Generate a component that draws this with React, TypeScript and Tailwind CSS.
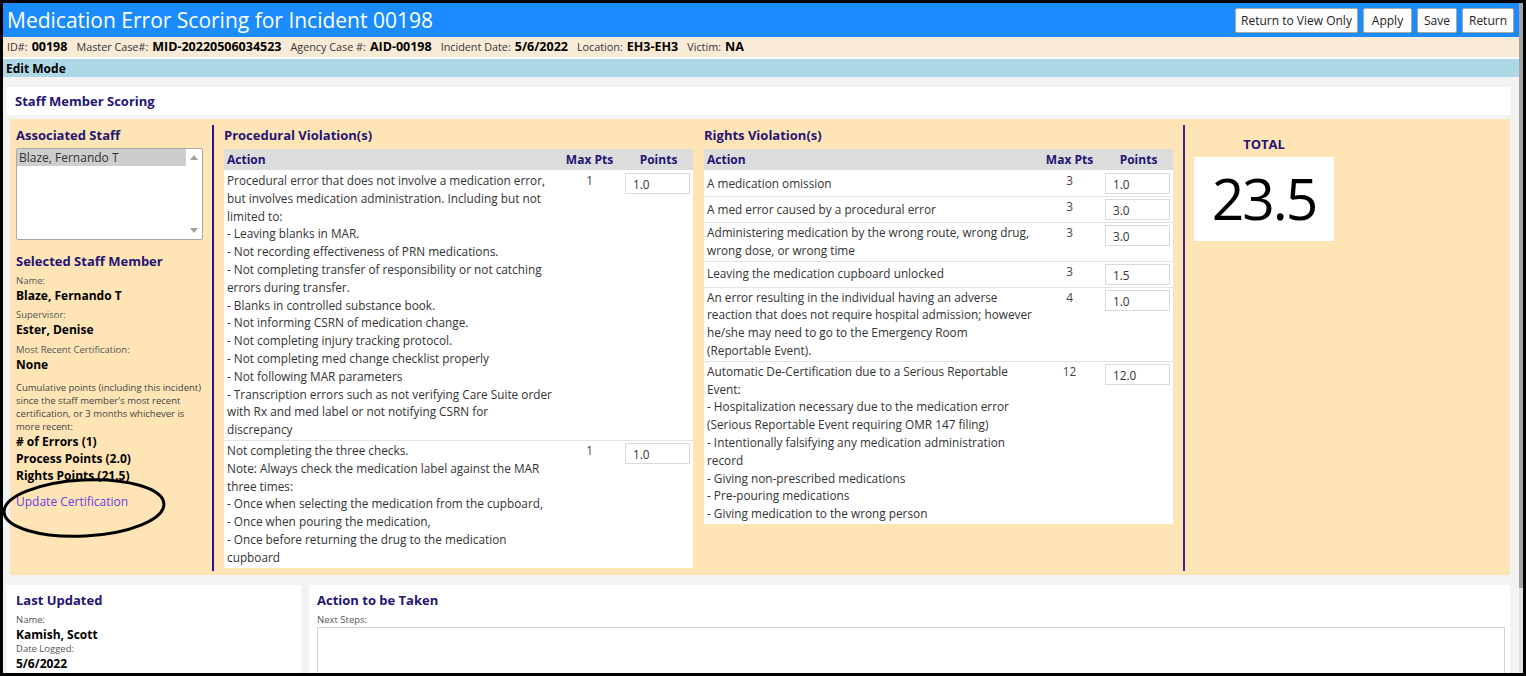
import React from 'react';

type Row = { lines: string[]; max: string; pts: string };

const procedural: Row[] = [
  {
    lines: [
      'Procedural error that does not involve a medication error,',
      'but involves medication administration. Including but not',
      'limited to:',
      '- Leaving blanks in MAR.',
      '- Not recording effectiveness of PRN medications.',
      '- Not completing transfer of responsibility or not catching',
      'errors during transfer.',
      '- Blanks in controlled substance book.',
      '- Not informing CSRN of medication change.',
      '- Not completing injury tracking protocol.',
      '- Not completing med change checklist properly',
      '- Not following MAR parameters',
      '- Transcription errors such as not verifying Care Suite order',
      'with Rx and med label or not notifying CSRN for',
      'discrepancy',
    ],
    max: '1',
    pts: '1.0',
  },
  {
    lines: [
      'Not completing the three checks.',
      'Note: Always check the medication label against the MAR',
      'three times:',
      '- Once when selecting the medication from the cupboard,',
      '- Once when pouring the medication,',
      '- Once before returning the drug to the medication',
      'cupboard',
    ],
    max: '1',
    pts: '1.0',
  },
];

const rights: Row[] = [
  { lines: ['A medication omission'], max: '3', pts: '1.0' },
  { lines: ['A med error caused by a procedural error'], max: '3', pts: '3.0' },
  {
    lines: ['Administering medication by the wrong route, wrong drug,', 'wrong dose, or wrong time'],
    max: '3',
    pts: '3.0',
  },
  { lines: ['Leaving the medication cupboard unlocked'], max: '3', pts: '1.5' },
  {
    lines: [
      'An error resulting in the individual having an adverse',
      'reaction that does not require hospital admission; however',
      'he/she may need to go to the Emergency Room',
      '(Reportable Event).',
    ],
    max: '4',
    pts: '1.0',
  },
  {
    lines: [
      'Automatic De-Certification due to a Serious Reportable',
      'Event:',
      '- Hospitalization necessary due to the medication error',
      '(Serious Reportable Event requiring OMR 147 filing)',
      '- Intentionally falsifying any medication administration',
      'record',
      '- Giving non-prescribed medications',
      '- Pre-pouring medications',
      '- Giving medication to the wrong person',
    ],
    max: '12',
    pts: '12.0',
  },
];

const caseInfo = [
  ['ID#:', '00198'],
  ['Master Case#:', 'MID-20220506034523'],
  ['Agency Case #:', 'AID-00198'],
  ['Incident Date:', '5/6/2022'],
  ['Location:', 'EH3-EH3'],
  ['Victim:', 'NA'],
];

function ViolationTable({ title, rows }: { title: string; rows: Row[] }) {
  return (
    <div>
      <div className="h-[20px] text-[13px] font-bold leading-[20px] text-[#231475]">{title}</div>
      <div className="mt-[4px] w-[469px] bg-white">
        <div className="mb-[1px] flex h-[21px] items-center bg-[#dcdcdc] text-[12px] font-bold text-[#231475]">
          <div className="w-[331px] pl-[3px]">Action</div>
          <div className="w-[69px] text-center">Max Pts</div>
          <div className="w-[69px] text-center">Points</div>
        </div>
        {rows.map((r, i) => (
          <div
            key={i}
            className={`flex text-[11.8px] ${i < rows.length - 1 ? 'border-b border-[#e4e4e4]' : ''}`}
          >
            <div className="flex w-[331px] flex-col justify-center py-[1px] pl-[3px] leading-[17.8px] text-[#333]">
              {r.lines.map((l, j) => (
                <div key={j} className="whitespace-nowrap">
                  {l}
                </div>
              ))}
            </div>
            <div className="w-[69px] pt-[1px] text-center leading-[17.8px] text-[#444]">{r.max}</div>
            <div className="w-[69px] py-[2px] pl-[1px]">
              <div className="h-[21px] w-[65px] border border-[#dadada] bg-white pl-[7px] leading-[20px] text-[#333]">
                {r.pts}
              </div>
            </div>
          </div>
        ))}
      </div>
    </div>
  );
}

function Label({ children }: { children: React.ReactNode }) {
  return <div className="text-[9.5px] leading-[14px] text-[#555]">{children}</div>;
}

export default function App() {
  return (
    <div className="flex h-[676px] w-[1526px] overflow-hidden border-[3px] border-black bg-[#f3f3f3] font-['Open_Sans',sans-serif]">
      <div className="flex w-[1516px] flex-col">
        {/* title bar */}
        <div className="flex h-[34px] shrink-0 items-center justify-between bg-[#1a8cff] pl-[4px] pr-[5px]">
          <h1 className="text-[21px] leading-[34px] text-white">Medication Error Scoring for Incident 00198</h1>
          <div className="flex gap-[5px] pt-[1px] text-[12px] text-[#222]">
            <button className="h-[25px] w-[123px] rounded-[2px] border border-[#a8a8a8] bg-white">Return to View Only</button>
            <button className="h-[25px] w-[49px] rounded-[2px] border border-[#a8a8a8] bg-white">Apply</button>
            <button className="h-[25px] w-[40px] rounded-[2px] border border-[#a8a8a8] bg-white">Save</button>
            <button className="h-[25px] w-[52px] rounded-[2px] border border-[#a8a8a8] bg-white">Return</button>
          </div>
        </div>

        {/* case info */}
        <div className="flex h-[20px] shrink-0 items-center gap-[9px] bg-[#faebd7] pl-[4px]">
          {caseInfo.map(([k, v]) => (
            <div key={k} className="flex items-baseline gap-[4px] whitespace-nowrap">
              <span className="text-[10.8px] text-[#333]">{k}</span>
              <span className="text-[12.5px] font-bold text-black">{v}</span>
            </div>
          ))}
        </div>
        <div className="h-[2px] shrink-0 bg-white" />
        <div className="h-[18px] shrink-0 bg-[#add8e6] pl-[3px] text-[12px] font-bold leading-[19px] text-black">
          Edit Mode
        </div>

        <div className="flex-1 pt-[10px]">
          {/* section title */}
          <div className="ml-[4px] h-[28px] w-[1503px] bg-white pl-[8px] text-[13px] font-bold leading-[28px] text-[#231475]">
            Staff Member Scoring
          </div>

          {/* scoring panel */}
          <div className="ml-[7px] mt-[4px] flex h-[456px] w-[1500px] bg-[#ffe4b5] pb-[4px] pt-[6px]">
            {/* left column */}
            <div className="relative w-[202px] pl-[6px]">
              <div className="h-[20px] text-[13px] font-bold leading-[20px] text-[#231475]">Associated Staff</div>
              <div className="mt-[3px] flex h-[92px] w-[187px] rounded-[2px] border border-[#a9a9a9] bg-white">
                <div className="flex-1">
                  <div className="h-[17px] bg-[#cdcdcd] pl-[2px] text-[12px] leading-[17px] text-[#333]">
                    Blaze, Fernando T
                  </div>
                </div>
                <div className="flex w-[16px] flex-col items-center justify-between py-[6px]">
                  <svg width="8" height="5" viewBox="0 0 8 5">
                    <polygon points="0,5 4,0 8,5" fill="#a3a3a3" />
                  </svg>
                  <svg width="8" height="5" viewBox="0 0 8 5">
                    <polygon points="0,0 8,0 4,5" fill="#a3a3a3" />
                  </svg>
                </div>
              </div>

              <div className="mt-[11px] h-[20px] text-[13px] font-bold leading-[20px] text-[#231475]">
                Selected Staff Member
              </div>
              <div className="mt-[3px]">
                <Label>Name:</Label>
              </div>
              <div className="text-[12px] font-bold leading-[16px] text-black">Blaze, Fernando T</div>
              <div className="mt-[4px]">
                <Label>Supervisor:</Label>
              </div>
              <div className="text-[12px] font-bold leading-[16px] text-black">Ester, Denise</div>
              <div className="mt-[5px]">
                <Label>Most Recent Certification:</Label>
              </div>
              <div className="text-[12px] font-bold leading-[16px] text-black">None</div>
              <div className="mt-[8px] text-[9.5px] leading-[13px] text-[#444]">
                Cumulative points (including this incident)
                <br />
                since the staff member's most recent
                <br />
                certification, or 3 months whichever is
                <br />
                more recent:
              </div>
              <div className="text-[12px] font-bold leading-[17px] text-black">
                <div># of Errors (1)</div>
                <div>Process Points (2.0)</div>
                <div>Rights Points (21.5)</div>
              </div>
              <a className="mt-[9px] block text-[12px] leading-[17px] text-[#6a3de8]" href="#">
                Update Certification
              </a>

              {/* hand-drawn highlight */}
              <svg
                className="pointer-events-none absolute left-[-11px] top-[350px]"
                width="170"
                height="66"
                viewBox="0 0 170 66"
              >
                <ellipse
                  cx="85"
                  cy="33"
                  rx="80"
                  ry="28"
                  fill="none"
                  stroke="#000"
                  strokeWidth="3"
                  transform="rotate(-3 85 33)"
                />
              </svg>
            </div>

            <div className="w-[2px] bg-[#2a1780]" />

            <div className="w-[480px] pl-[10px]">
              <ViolationTable title="Procedural Violation(s)" rows={procedural} />
            </div>

            <div className="w-[489px] px-[10px]">
              <ViolationTable title="Rights Violation(s)" rows={rights} />
            </div>

            <div className="w-[2px] bg-[#3b2487]" />

            <div className="pl-[9px] pt-[10px]">
              <div className="w-[140px] text-center text-[13px] font-bold leading-[18px] text-[#231475]">TOTAL</div>
              <div className="mt-[4px] flex h-[84px] w-[140px] items-center justify-center bg-white text-[57px] tracking-[-2px] text-black">
                23.5
              </div>
            </div>
          </div>

          {/* bottom panels */}
          <div className="ml-[4px] mt-[10px] flex h-[100px] gap-[8px]">
            <div className="w-[294px] bg-white pl-[9px] pt-[5px]">
              <div className="h-[20px] text-[13px] font-bold leading-[20px] text-[#231475]">Last Updated</div>
              <div className="mt-[3px]">
                <Label>Name:</Label>
              </div>
              <div className="text-[12px] font-bold leading-[15px] text-black">Kamish, Scott</div>
              <Label>Date Logged:</Label>
              <div className="text-[12px] font-bold leading-[16px] text-black">5/6/2022</div>
            </div>
            <div className="w-[1201px] bg-white pl-[8px] pr-[5px] pt-[5px]">
              <div className="h-[20px] text-[13px] font-bold leading-[20px] text-[#231475]">Action to be Taken</div>
              <div className="mt-[3px]">
                <Label>Next Steps:</Label>
              </div>
              <div className="h-[80px] w-full border border-[#d4d4d4] bg-white" />
            </div>
          </div>
        </div>
      </div>

      {/* page scrollbar */}
      <div className="flex w-[4px] flex-col bg-[#e2e2e2]">
        <div className="h-[585px] w-[4px] bg-[#a4a4a4]" />
      </div>
    </div>
  );
}
